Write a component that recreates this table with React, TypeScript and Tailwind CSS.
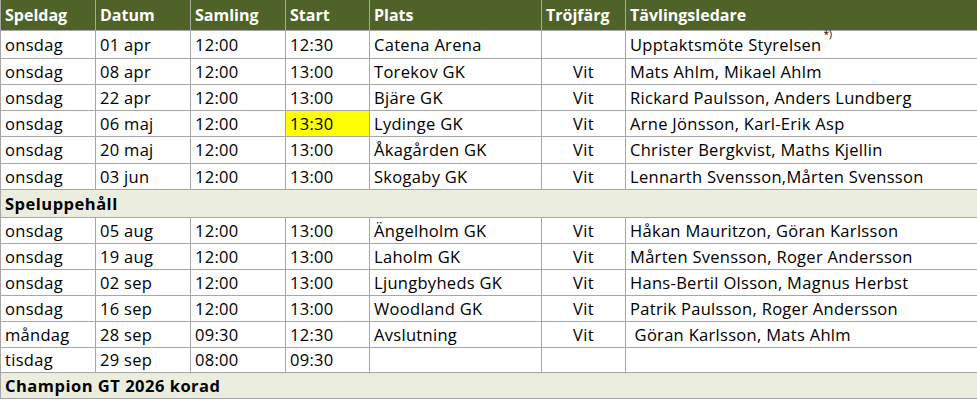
type Match = {
  day: string;
  date: string;
  samling: string;
  start: string;
  plats: string;
  trojfarg: string;
  ledare: string;
  note?: string;
  highlight?: boolean;
  height?: string;
};

type Row =
  | { kind: "match"; match: Match }
  | { kind: "section"; label: string; height: string };

const HEADERS = ["Speldag", "Datum", "Samling", "Start", "Plats", "Tröjfärg", "Tävlingsledare"];

const m = (match: Match): Row => ({ kind: "match", match });

const ROWS: Row[] = [
  m({ day: "onsdag", date: "01 apr", samling: "12:00", start: "12:30", plats: "Catena Arena", trojfarg: "", ledare: "Upptaktsmöte Styrelsen", note: "*)", height: "h-[28px]" }),
  m({ day: "onsdag", date: "08 apr", samling: "12:00", start: "13:00", plats: "Torekov GK", trojfarg: "Vit", ledare: "Mats Ahlm, Mikael Ahlm" }),
  m({ day: "onsdag", date: "22 apr", samling: "12:00", start: "13:00", plats: "Bjäre GK", trojfarg: "Vit", ledare: "Rickard Paulsson, Anders Lundberg" }),
  m({ day: "onsdag", date: "06 maj", samling: "12:00", start: "13:30", plats: "Lydinge GK", trojfarg: "Vit", ledare: "Arne Jönsson, Karl-Erik Asp", highlight: true }),
  m({ day: "onsdag", date: "20 maj", samling: "12:00", start: "13:00", plats: "Åkagården GK", trojfarg: "Vit", ledare: "Christer Bergkvist, Maths Kjellin", height: "h-[27px]" }),
  m({ day: "onsdag", date: "03 jun", samling: "12:00", start: "13:00", plats: "Skogaby GK", trojfarg: "Vit", ledare: "Lennarth Svensson,Mårten Svensson" }),
  { kind: "section", label: "Speluppehåll", height: "h-[28px]" },
  m({ day: "onsdag", date: "05 aug", samling: "12:00", start: "13:00", plats: "Ängelholm GK", trojfarg: "Vit", ledare: "Håkan Mauritzon, Göran Karlsson" }),
  m({ day: "onsdag", date: "19 aug", samling: "12:00", start: "13:00", plats: "Laholm GK", trojfarg: "Vit", ledare: "Mårten Svensson, Roger Andersson" }),
  m({ day: "onsdag", date: "02 sep", samling: "12:00", start: "13:00", plats: "Ljungbyheds GK", trojfarg: "Vit", ledare: "Hans-Bertil Olsson, Magnus Herbst" }),
  m({ day: "onsdag", date: "16 sep", samling: "12:00", start: "13:00", plats: "Woodland GK", trojfarg: "Vit", ledare: "Patrik Paulsson, Roger Andersson" }),
  m({ day: "måndag", date: "28 sep", samling: "09:30", start: "12:30", plats: "Avslutning", trojfarg: "Vit", ledare: "\u00a0Göran Karlsson, Mats Ahlm" }),
  m({ day: "tisdag", date: "29 sep", samling: "08:00", start: "09:30", plats: "", trojfarg: "", ledare: "", height: "h-[25px]" }),
  { kind: "section", label: "Champion GT 2026 korad", height: "h-[26px]" },
];

const cell = "border border-[#a6a6a6] px-[4px] pt-[2px] align-middle whitespace-nowrap";

const MatchRow: React.FC<{ match: Match }> = ({ match }) => (
  <tr className={match.height ?? "h-[26px]"}>
    <td className={cell}>{match.day}</td>
    <td className={cell}>{match.date}</td>
    <td className={cell}>{match.samling}</td>
    <td className={`${cell} ${match.highlight ? "bg-[#ffff00]" : ""}`}>{match.start}</td>
    <td className={cell}>{match.plats}</td>
    <td className={`${cell} text-center`}>{match.trojfarg}</td>
    <td className={cell}>
      {match.ledare}
      {match.note && <sup className="ml-[2px] text-[10px] tracking-normal align-[8px]">{match.note}</sup>}
    </td>
  </tr>
);

export default function App() {
  return (
    <div className="w-[977px] h-[400px] bg-white overflow-hidden font-['Open_Sans',sans-serif] text-[16.5px] tracking-[0.3px] leading-none text-black">
      <table className="w-[977px] table-fixed border-collapse">
        <colgroup>
          <col className="w-[95px]" />
          <col className="w-[95px]" />
          <col className="w-[95px]" />
          <col className="w-[84px]" />
          <col className="w-[172px]" />
          <col className="w-[84px]" />
          <col className="w-[352px]" />
        </colgroup>
        <thead>
          <tr className="h-[30px] bg-[#4f6228] text-white text-[16px] tracking-normal">
            {HEADERS.map((h) => (
              <th key={h} className="border-x border-b border-[#a6a6a6] px-[4px] text-left font-bold align-middle">
                {h}
              </th>
            ))}
          </tr>
        </thead>
        <tbody>
          {ROWS.map((row, i) =>
            row.kind === "match" ? (
              <MatchRow key={i} match={row.match} />
            ) : (
              <tr key={i} className={`${row.height} bg-[#ebeedf]`}>
                <td colSpan={7} className="border border-[#a6a6a6] px-[4px] pt-[2px] font-bold tracking-[0.5px] align-middle">
                  {row.label}
                </td>
              </tr>
            ),
          )}
        </tbody>
      </table>
    </div>
  );
}
